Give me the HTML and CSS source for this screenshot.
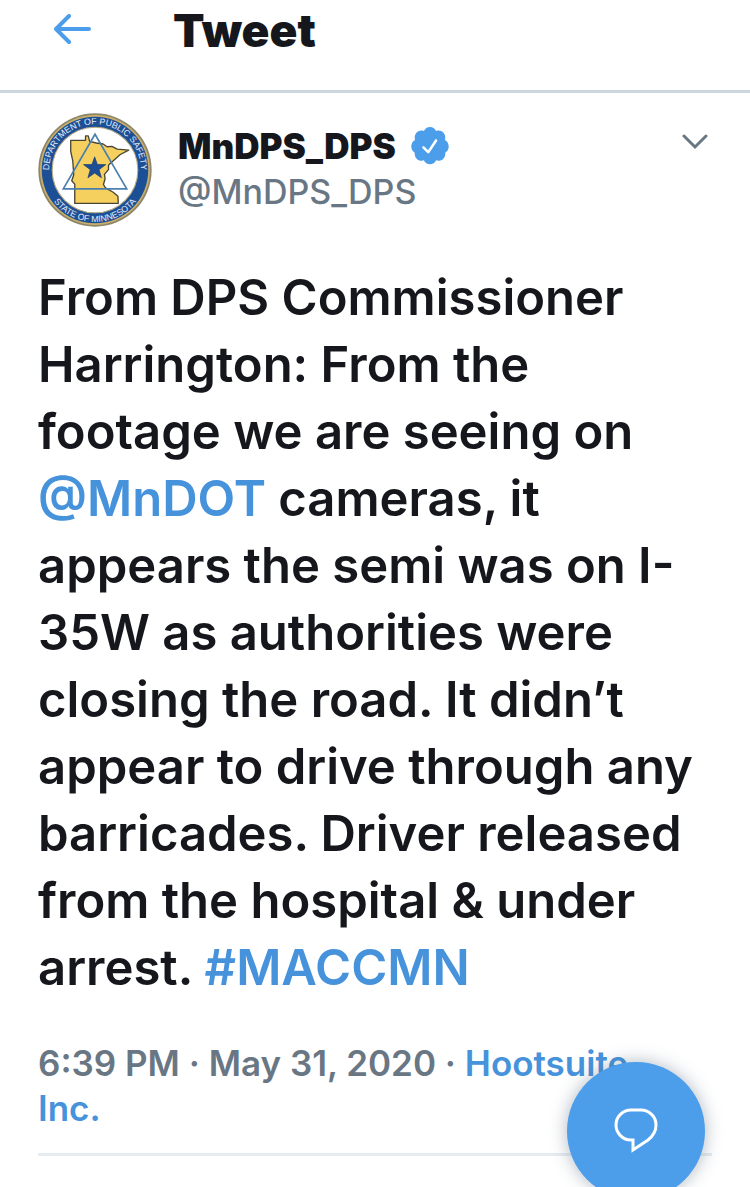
FILE: index.html
```
<!DOCTYPE html>
<html lang="en">
<head>
<meta charset="utf-8">
<meta name="viewport" content="width=device-width, initial-scale=1">
<title>Tweet</title>
<link rel="stylesheet" href="styles.css">
</head>
<body>
<header class="topbar">
  <button class="icon-button" type="button" aria-label="Back">
    <svg class="back-icon" viewBox="0 0 38 32" aria-hidden="true"><path d="M16 2 3 15l13 13M3 15h33"/></svg>
  </button>
  <h1 class="topbar-title">Tweet</h1>
</header>
<main>
  <article class="tweet">
    <div class="author">
      <a class="avatar" href="#profile" aria-label="MnDPS_DPS profile">
        <svg viewBox="27 26 338 338" aria-hidden="true">
          <defs>
            <path id="arc-top" d="M60 195a136 136 0 0 1 272 0"/>
            <path id="arc-bottom" d="M42 195a154 154 0 0 0 308 0"/>
          </defs>
          <circle cx="196" cy="195" r="168" fill="#8d8568"/>
          <circle cx="196" cy="195" r="163" fill="#c9b06a"/>
          <circle cx="196" cy="195" r="158" fill="#1d4f97"/>
          <circle cx="196" cy="195" r="127" fill="#fff" stroke="#b9ae83" stroke-width="3"/>
          <path d="M124 107h44v-13h8l4 16 20 5 20 3 12 8 14-1 16 8 34 3-25 13-30 27-5 5v13l-12 14 2 13-5 17 6 10 23 13 14 12 1 21H136v-57l-9-10 6-18-3-42-6-27z" fill="#f6d05f" stroke="#494536" stroke-width="4" stroke-linejoin="round"/>
          <path d="M196 89 102 251h188z" fill="none" stroke="#4b80ae" stroke-width="5"/>
          <path d="m195 156 8 23h25l-20 15 7 24-20-14-20 14 7-24-20-15h25z" fill="#1d4f97" stroke="#173a69" stroke-width="2"/>
          <text class="seal-text"><textPath href="#arc-top" startOffset="50%">DEPARTMENT OF PUBLIC SAFETY</textPath></text>
          <text class="seal-text"><textPath href="#arc-bottom" startOffset="50%">STATE OF MINNESOTA</textPath></text>
        </svg>
      </a>
      <div class="identity">
        <div class="name-row">
          <a class="name" href="#profile">MnDPS_DPS</a>
          <svg class="verified" viewBox="1 1 22 23" role="img" aria-label="Verified account"><path d="M22.5 12.5c0-1.58-.875-2.95-2.148-3.6.154-.435.238-.905.238-1.4 0-2.21-1.71-3.998-3.818-3.998-.47 0-.92.084-1.336.25C14.818 2.415 13.51 1.5 12 1.5s-2.816.917-3.437 2.25c-.415-.165-.866-.25-1.336-.25-2.11 0-3.818 1.79-3.818 4 0 .494.083.964.237 1.4-1.272.65-2.147 2.018-2.147 3.6 0 1.495.782 2.798 1.942 3.486-.02.17-.032.34-.032.514 0 2.21 1.708 4 3.818 4 .47 0 .92-.086 1.335-.25.62 1.334 1.926 2.25 3.437 2.25 1.512 0 2.818-.916 3.437-2.25.415.163.865.248 1.336.248 2.11 0 3.818-1.79 3.818-4 0-.174-.012-.344-.033-.513 1.158-.687 1.943-1.99 1.943-3.484z" fill="#4c9eeb"/><path d="m8.3 13 2.7 2.7 4.4-6.6" fill="none" stroke="#fff" stroke-width="1.4" stroke-linecap="round" stroke-linejoin="round"/></svg>
        </div>
        <a class="handle" href="#profile">@MnDPS_DPS</a>
      </div>
      <button class="icon-button more" type="button" aria-label="More">
        <svg class="more-icon" viewBox="0 0 28 16" aria-hidden="true"><path d="m3 2 11 11L25 2"/></svg>
      </button>
    </div>
    <p class="tweet-text">From DPS Commissioner Harrington: From the footage we are seeing on <a href="#mndot">@MnDOT</a> cameras, it appears the semi was on I-35W as authorities were closing the road. It didn’t appear to drive through any barricades. Driver released from the hospital &amp; under arrest. <a href="#maccmn">#MACCMN</a></p>
    <p class="meta">6:39 PM · May 31, 2020 · <a href="#source">Hootsuite Inc.</a></p>
  </article>
</main>
<button class="reply" type="button" aria-label="Reply">
  <svg viewBox="0 0 44 46" aria-hidden="true"><path d="M17 2h10a15 15 0 0 1 15 15c0 7-3 11-8 15L19 42V32h-2A15 15 0 0 1 17 2z"/></svg>
</button>
</body>
</html>
```

FILE: styles.css
```
* { box-sizing: border-box; }
body {
  margin: 0;
  background: #fff;
  color: #15171c;
  font-family: Inter, "Liberation Sans", sans-serif;
}
a { color: #4693dc; text-decoration: none; }
button { font: inherit; cursor: pointer; }
svg { display: block; }

.icon-button { padding: 0; border: 0; background: none; }
.topbar {
  display: flex;
  align-items: center;
  gap: 82px;
  padding: 4px 53px 34px;
  border-bottom: 3px solid #ccd6dd;
}
.back-icon {
  width: 38px;
  height: 32px;
  fill: none;
  stroke: #4c9eeb;
  stroke-width: 4;
  stroke-linecap: round;
  stroke-linejoin: round;
}
.topbar-title { margin: 0; font-size: 46px; line-height: 52px; font-weight: 900; }

.tweet { margin: 0 38px; padding-top: 20px; border-bottom: 3px solid #e6ecf0; }
.author { display: flex; align-items: flex-start; gap: 26px; }
.avatar { flex: none; width: 114px; height: 114px; }
.seal-text {
  fill: #e4edf8;
  font-family: "Liberation Sans", Arial, sans-serif;
  font-size: 26px;
  text-anchor: middle;
}
.identity { flex: 1; min-width: 0; padding-top: 11px; }
.name-row { display: flex; align-items: center; gap: 14px; height: 45px; }
.name { color: #15171c; font-size: 35px; line-height: 45px; font-weight: 900; }
.verified { width: 40px; height: 41px; }
.handle { display: block; color: #697784; font-size: 34px; line-height: 45px; font-weight: 500; }
.more { padding-top: 21px; margin-right: 3px; }
.more-icon {
  width: 28px;
  height: 16px;
  fill: none;
  stroke: #697784;
  stroke-width: 3;
  stroke-linecap: round;
}
.tweet-text { margin: 37px 0 0; font-size: 49px; line-height: 67px; font-weight: 600; }
.meta {
  margin: 40px 0 0;
  padding: 0 24px 22px 0;
  color: #697784;
  font-size: 35px;
  line-height: 45px;
  font-weight: 600;
}

.reply {
  position: fixed;
  right: 45px;
  bottom: -13px;
  display: grid;
  place-items: center;
  width: 138px;
  height: 138px;
  padding: 0;
  border: 0;
  border-radius: 50%;
  background: #4c9eeb;
  box-shadow: 0 0 18px rgb(80 100 120 / 45%);
}
.reply svg {
  width: 44px;
  height: 46px;
  fill: none;
  stroke: #fff;
  stroke-width: 3;
}
```
